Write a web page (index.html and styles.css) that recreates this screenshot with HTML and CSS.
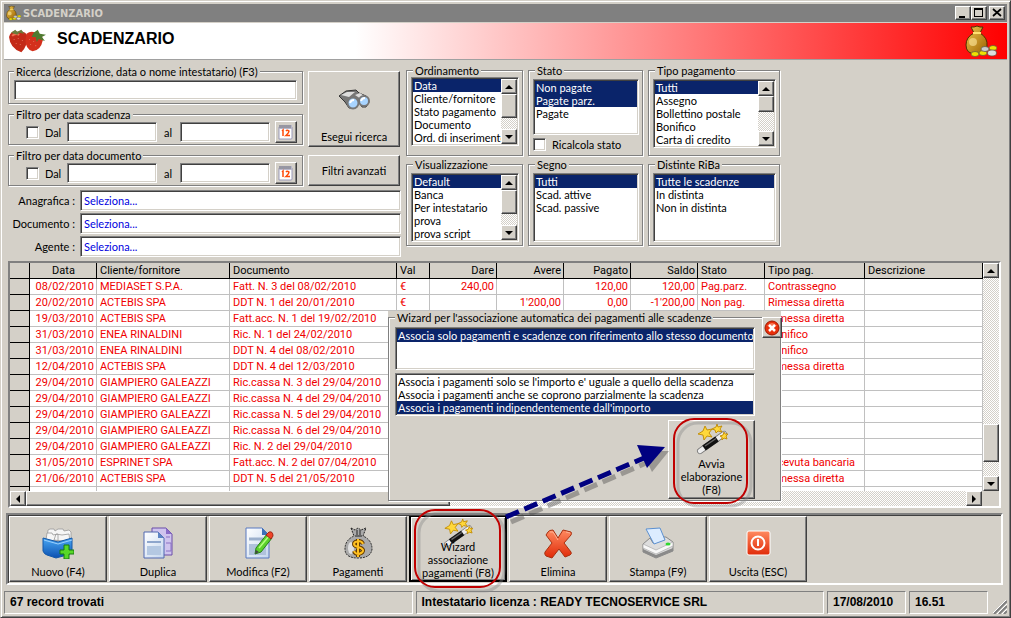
FILE: index.html
```html
<!DOCTYPE html>
<html lang="it">
<head>
    <meta charset="UTF-8">
    <meta name="viewport" content="width=device-width, initial-scale=1.0">
    <title>SCADENZARIO</title>
    <link rel="stylesheet" href="styles.css">
</head>
<body>
    <!-- icone condivise -->
    <svg class="defs" width="0" height="0">
        <defs>
            <linearGradient id="gold" x1="0" y1="0" x2="1" y2="1"><stop offset="0" stop-color="#f0c850"/><stop offset="1" stop-color="#9a6000"/></linearGradient>
            <linearGradient id="blue" x1="0" y1="0" x2="0" y2="1"><stop offset="0" stop-color="#4aa8f4"/><stop offset="1" stop-color="#0a4fb0"/></linearGradient>
            <linearGradient id="page" x1="0" y1="0" x2="1" y2="1"><stop offset="0" stop-color="#ffffff"/><stop offset="1" stop-color="#c4d6ee"/></linearGradient>
            <linearGradient id="red" x1="0" y1="0" x2="0" y2="1"><stop offset="0" stop-color="#ff8a60"/><stop offset="1" stop-color="#e02a08"/></linearGradient>
            <symbol id="wand" viewBox="0 0 32 32">
                <path d="M4 28 28 11" stroke="#777" stroke-width="6" stroke-linecap="round"/>
                <path d="M4 28 28 11" stroke="#eee" stroke-width="4.500" stroke-linecap="round"/>
                <path d="M8 25 21 16" stroke="#111" stroke-width="6"/>
                <path d="M9 23 20 15.500" stroke="#666" stroke-width="1.500"/>
                <g fill="#ffd83a" stroke="#c08a00" stroke-width=".9" stroke-linejoin="round">
                    <path d="M9 3l2 4 5-1-3 4 3 4-5-1-3 4-1-5-5-1 5-3z"/>
                    <path d="M21 1l1 3 4-1-2 3 2 3-4-1-2 2-1-3-3-1 4-2z"/>
                    <path d="M28 9l1 2 3 0-2 2 1 3-3-1-2 2 0-3-2-1 3-1z"/>
                </g>
            </symbol>
            <symbol id="calendar" viewBox="0 0 16 16">
                <path d="M1 3h13v11a1 1 0 0 1-1 1H1z" fill="#fff" stroke="#9a9ab8"/>
                <path d="M1 1h13v4H1z" fill="#b8b8cc"/>
                <path d="M2 1v3M4 1v3M6 1v3M8 1v3M10 1v3M12 1v3" stroke="#666" stroke-width=".8"/>
                <path d="M4 7l1-1v6M8 7q1-1.500 3 0 0 2-3 4.500h4" fill="none" stroke="#ff4a08" stroke-width="1.500"/>
            </symbol>
            <symbol id="sack" viewBox="0 0 32 32">
                <path d="M6 2l3 0 3-1 3 1 3 0-3 6q8 5 7 13-1 8-11 8Q1 29 1 20q0-8 8-12z" fill="url(#gold)" stroke="#4c3300"/>
                <path d="M8 8h8" stroke="#ffe070" stroke-width="2"/>
                <ellipse cx="8" cy="17" rx="4" ry="4" fill="#ffe9a0" opacity=".6"/>
                <g stroke="#554" stroke-width=".7"><ellipse cx="10" cy="29" rx="4" ry="2.500" fill="#f0e000"/><ellipse cx="18" cy="28" rx="4" ry="2.500" fill="#f0e000"/><ellipse cx="28" cy="23" rx="4" ry="2.500" fill="#f0e000"/><ellipse cx="20" cy="24" rx="4" ry="2.500" fill="#ccc"/><ellipse cx="27" cy="28" rx="4.500" ry="3" fill="#ddd"/></g>
            </symbol>
        </defs>
    </svg>

    <div class="window">
        <div class="titlebar">
            <svg class="title-icon" viewBox="0 0 32 32"><use href="#sack"/></svg>
            <span class="title-text">SCADENZARIO</span>
            <button class="win-btn" aria-label="Riduci"><svg viewBox="0 0 14 12"><path d="M3 9h6v2H3z"/></svg></button>
            <button class="win-btn" aria-label="Ingrandisci"><svg viewBox="0 0 14 12"><path d="M2 1h9v9H2zM3 3v6h7V3z" fill-rule="evenodd"/></svg></button>
            <button class="win-btn win-close" aria-label="Chiudi"><svg viewBox="0 0 14 12"><path d="M3 2l8 7M11 2l-8 7" stroke="#000" stroke-width="1.700"/></svg></button>
        </div>

        <div class="header">
            <svg class="berries" viewBox="0 0 38 24">
                <path d="M1 8Q3 1 9 3q9-1 10 5 0 9-6 15Q2 19 1 8z" fill="#c32a18"/>
                <path d="M18 5q5-4 11 0 5 2 5 6-2 10-10 11-7-2-7-11z" fill="#d4301c"/>
                <path d="M4 7q3-3 7-1" stroke="#f07050" stroke-width="2" fill="none"/>
                <path d="M3 4l4-3 2 2 4-2 3 4-5-1-2 2z" fill="#6b7a3a"/>
                <path d="M25 4l4-3 2 4 6 1-4 2 3 4-6-2-2 3-1-5-4 0z" fill="#4f7a30"/>
                <path d="M6 10v1M10 9v1M14 11v1M8 14v1M12 15v1M21 10v1M25 12v1M22 15v1M27 16v1" stroke="#e06850" stroke-width="1"/>
            </svg>
            <h1>SCADENZARIO</h1>
            <svg class="header-sack" viewBox="0 0 32 32"><use href="#sack"/></svg>
        </div>

        <div class="filters">
            <div class="left">
                <div class="search">
                    <div class="boxes">
                        <fieldset class="box box-search">
                            <legend><label for="ricerca">Ricerca (descrizione, data o nome intestatario) (F3)</label></legend>
                            <input class="field" id="ricerca" type="text">
                        </fieldset>
                        <fieldset class="box box-date">
                            <legend>Filtro per data scadenza</legend>
                            <input class="check" id="scad" type="checkbox"><label class="from" for="scad">Dal</label>
                            <input class="field date" type="text" aria-label="Scadenza dal">
                            <label class="to" for="scad-al">al</label>
                            <input class="field date" id="scad-al" type="text">
                            <button class="btn cal" aria-label="Calendario scadenza"><svg><use href="#calendar"/></svg></button>
                        </fieldset>
                        <fieldset class="box box-date">
                            <legend>Filtro per data documento</legend>
                            <input class="check" id="docu" type="checkbox"><label class="from" for="docu">Dal</label>
                            <input class="field date" type="text" aria-label="Documento dal">
                            <label class="to" for="docu-al">al</label>
                            <input class="field date" id="docu-al" type="text">
                            <button class="btn cal" aria-label="Calendario documento"><svg><use href="#calendar"/></svg></button>
                        </fieldset>
                    </div>
                    <div class="search-buttons">
                        <button class="btn btn-search">
                            <svg viewBox="0 0 32 22">
                                <path d="M1 7L8 2l10-1 3 3 7 3 3 6-3 5h-4l-3-5-4 6h-6L7 13z" fill="#777" stroke="#333"/>
                                <path d="M3 6l6-3 8 0-6 5zM17 6l5-2 6 4-5 2z" fill="#ddd"/>
                                <circle cx="15" cy="14" r="5.500" fill="#a8d4ff" stroke="#777" stroke-width="2"/>
                                <circle cx="26" cy="12" r="5" fill="#a8d4ff" stroke="#777" stroke-width="2"/>
                                <path d="M12 14q1-3 4-3M23 12q1-3 4-3" stroke="#fff" stroke-width="2" fill="none"/>
                            </svg>
                            Esegui ricerca
                        </button>
                        <button class="btn btn-advanced">Filtri avanzati</button>
                    </div>
                </div>
                <div class="lookup">
                    <label for="anagrafica">Anagrafica :</label><input class="field" id="anagrafica" type="text" value="Seleziona...">
                    <label for="documento">Documento :</label><input class="field" id="documento" type="text" value="Seleziona...">
                    <label for="agente">Agente :</label><input class="field" id="agente" type="text" value="Seleziona...">
                </div>
            </div>

            <div class="lists">
                <fieldset class="box sort">
                    <legend>Ordinamento</legend>
                    <div class="listbox">
                        <select size="5" aria-label="Ordinamento">
                            <option selected>Data</option><option>Cliente/fornitore</option><option>Stato pagamento</option><option>Documento</option><option>Ord. di inserimento</option>
                        </select>
                        <div class="vscroll"><button class="btn arrow up" aria-label="Su"></button><div class="thumb"></div><button class="btn arrow down" aria-label="Giù"></button></div>
                    </div>
                </fieldset>
                <fieldset class="box">
                    <legend>Stato</legend>
                    <div class="listbox">
                        <select class="four" size="4" multiple aria-label="Stato">
                            <option selected>Non pagate</option><option selected>Pagate parz.</option><option>Pagate</option>
                        </select>
                    </div>
                    <div class="recalc"><input class="check" id="ricalcola" type="checkbox"><label for="ricalcola">Ricalcola stato</label></div>
                </fieldset>
                <fieldset class="box">
                    <legend>Tipo pagamento</legend>
                    <div class="listbox">
                        <select size="5" aria-label="Tipo pagamento">
                            <option selected>Tutti</option><option>Assegno</option><option>Bollettino postale</option><option>Bonifico</option><option>Carta di credito</option>
                        </select>
                        <div class="vscroll"><button class="btn arrow up" aria-label="Su"></button><div class="thumb short"></div><button class="btn arrow down" aria-label="Giù"></button></div>
                    </div>
                </fieldset>
                <fieldset class="box">
                    <legend>Visualizzazione</legend>
                    <div class="listbox">
                        <select size="5" aria-label="Visualizzazione">
                            <option selected>Default</option><option>Banca</option><option>Per intestatario</option><option>prova</option><option>prova script</option>
                        </select>
                        <div class="vscroll"><button class="btn arrow up" aria-label="Su"></button><div class="thumb"></div><button class="btn arrow down" aria-label="Giù"></button></div>
                    </div>
                </fieldset>
                <fieldset class="box">
                    <legend>Segno</legend>
                    <div class="listbox">
                        <select size="5" aria-label="Segno">
                            <option selected>Tutti</option><option>Scad. attive</option><option>Scad. passive</option>
                        </select>
                    </div>
                </fieldset>
                <fieldset class="box">
                    <legend>Distinte RiBa</legend>
                    <div class="listbox">
                        <select size="5" aria-label="Distinte RiBa">
                            <option selected>Tutte le scadenze</option><option>In distinta</option><option>Non in distinta</option>
                        </select>
                    </div>
                </fieldset>
            </div>
        </div>

        <div class="grid">
            <div class="grid-body">
                <table>
                    <colgroup>
                        <col class="c-mark"><col class="c-num"><col class="c-name"><col class="c-doc"><col class="c-val"><col class="c-num"><col class="c-num"><col class="c-num"><col class="c-num"><col class="c-num"><col class="c-type"><col>
                    </colgroup>
                    <thead>
                        <tr><th></th><th class="center">Data</th><th>Cliente/fornitore</th><th>Documento</th><th>Val</th><th class="num">Dare</th><th class="num">Avere</th><th class="num">Pagato</th><th class="num">Saldo</th><th>Stato</th><th>Tipo pag.</th><th>Descrizione</th></tr>
                    </thead>
                    <tbody>
                        <tr><th></th><td class="num">08/02/2010</td><td>MEDIASET S.P.A.</td><td>Fatt. N. 3 del 08/02/2010</td><td>€</td><td class="num">240,00</td><td></td><td class="num">120,00</td><td class="num">120,00</td><td>Pag.parz.</td><td>Contrassegno</td><td></td></tr>
                        <tr><th></th><td class="num">20/02/2010</td><td>ACTEBIS SPA</td><td>DDT N. 1 del 20/01/2010</td><td>€</td><td></td><td class="num">1'200,00</td><td class="num">0,00</td><td class="num">-1'200,00</td><td>Non pag.</td><td>Rimessa diretta</td><td></td></tr>
                        <tr><th></th><td class="num">19/03/2010</td><td>ACTEBIS SPA</td><td>Fatt.acc. N. 1 del 19/02/2010</td><td></td><td></td><td></td><td></td><td></td><td></td><td>Rimessa diretta</td><td></td></tr>
                        <tr><th></th><td class="num">31/03/2010</td><td>ENEA RINALDINI</td><td>Ric. N. 1 del 24/02/2010</td><td></td><td></td><td></td><td></td><td></td><td></td><td>Bonifico</td><td></td></tr>
                        <tr><th></th><td class="num">31/03/2010</td><td>ENEA RINALDINI</td><td>DDT N. 4 del 08/02/2010</td><td></td><td></td><td></td><td></td><td></td><td></td><td>Bonifico</td><td></td></tr>
                        <tr><th></th><td class="num">12/04/2010</td><td>ACTEBIS SPA</td><td>DDT N. 4 del 12/03/2010</td><td></td><td></td><td></td><td></td><td></td><td></td><td>Rimessa diretta</td><td></td></tr>
                        <tr><th></th><td class="num">29/04/2010</td><td>GIAMPIERO GALEAZZI</td><td>Ric.cassa N. 3 del 29/04/2010</td><td></td><td></td><td></td><td></td><td></td><td></td><td></td><td></td></tr>
                        <tr><th></th><td class="num">29/04/2010</td><td>GIAMPIERO GALEAZZI</td><td>Ric.cassa N. 4 del 29/04/2010</td><td></td><td></td><td></td><td></td><td></td><td></td><td></td><td></td></tr>
                        <tr><th></th><td class="num">29/04/2010</td><td>GIAMPIERO GALEAZZI</td><td>Ric.cassa N. 5 del 29/04/2010</td><td></td><td></td><td></td><td></td><td></td><td></td><td></td><td></td></tr>
                        <tr><th></th><td class="num">29/04/2010</td><td>GIAMPIERO GALEAZZI</td><td>Ric.cassa N. 6 del 29/04/2010</td><td></td><td></td><td></td><td></td><td></td><td></td><td></td><td></td></tr>
                        <tr><th></th><td class="num">29/04/2010</td><td>GIAMPIERO GALEAZZI</td><td>Ric. N. 2 del 29/04/2010</td><td></td><td></td><td></td><td></td><td></td><td></td><td></td><td></td></tr>
                        <tr><th></th><td class="num">31/05/2010</td><td>ESPRINET SPA</td><td>Fatt.acc. N. 2 del 07/04/2010</td><td></td><td></td><td></td><td></td><td></td><td></td><td>Ricevuta bancaria</td><td></td></tr>
                        <tr><th></th><td class="num">21/06/2010</td><td>ACTEBIS SPA</td><td>DDT N. 5 del 21/05/2010</td><td></td><td></td><td></td><td></td><td></td><td></td><td>Rimessa diretta</td><td></td></tr>
                        <tr class="cut"><th></th><td></td><td></td><td></td><td></td><td></td><td></td><td></td><td></td><td></td><td></td><td></td></tr>
                    </tbody>
                </table>
                <div class="vscroll"><button class="btn arrow up" aria-label="Su"></button><div class="track"></div><div class="thumb tall"></div><div class="gap"></div><button class="btn arrow down" aria-label="Giù"></button></div>
            </div>
            <div class="hscroll"><button class="btn arrow prev" aria-label="Sinistra"></button><div class="thumb wide"></div><div class="track"></div><button class="btn arrow next" aria-label="Destra"></button></div>

            <div class="wizard">
                <fieldset class="box">
                    <legend>Wizard per l'associazione automatica dei pagamenti alle scadenze</legend>
                    <div class="listbox">
                        <select class="three" size="3" aria-label="Riferimento">
                            <option selected>Associa solo pagamenti e scadenze con riferimento allo stesso documento</option>
                        </select>
                    </div>
                    <div class="listbox">
                        <select class="three" size="3" aria-label="Importo">
                            <option>Associa i pagamenti solo se l'importo e' uguale a quello della scadenza</option>
                            <option>Associa i pagamenti anche se coprono parzialmente la scadenza</option>
                            <option selected>Associa i pagamenti indipendentemente dall'importo</option>
                        </select>
                    </div>
                    <button class="btn btn-run"><svg><use href="#wand"/></svg>Avvia<br>elaborazione<br>(F8)</button>
                </fieldset>
                <button class="btn wizard-close" aria-label="Chiudi wizard"><svg viewBox="0 0 16 16"><circle cx="8" cy="8" r="7" fill="#e8300c" stroke="#a01800"/><path d="M3 6q5-6 10 0" fill="#ff9878" opacity=".7"/><path d="M5 5l6 6M11 5l-6 6" stroke="#fff" stroke-width="2.500"/></svg></button>
            </div>
        </div>

        <div class="toolbar">
            <button class="btn tool">
                <svg viewBox="0 0 32 32">
                    <g fill="#f6f6f6" stroke="#999" stroke-width=".8"><path d="M5 12l1-9 2-1h4l1 2 3-2h5l1 2 5-1 2 2v9z"/><path d="M4 13l1-7h5l1 2 5-1v7zM12 13l2-6 6 1 7-1 1 8z"/></g>
                    <path d="M1 11l15 4 14-4v13q-1 3-5 4l-11 3-9-3q-3-1-4-4z" fill="url(#blue)" stroke="#1458a8"/>
                    <path d="M2 13l14 4 14-4" stroke="#9ad0ff" fill="none"/>
                    <path d="M22 18h5v5h5v4h-5v5h-5v-5h-4v-4h4z" fill="#58d828" stroke="#187a10"/>
                </svg>
                Nuovo (F4)
            </button>
            <button class="btn tool">
                <svg viewBox="0 0 32 32">
                    <path d="M10 1h14l6 6v21H10z" fill="#cfc4ee" stroke="#6a4ca8"/>
                    <path d="M24 1v6h6z" fill="#8a6cc8"/><path d="M24 10h4M24 16h5v8h-5" stroke="#8a70c4" fill="none"/>
                    <path d="M2 5h14l6 6v20H2z" fill="url(#page)" stroke="#5068b0"/>
                    <path d="M16 5v6h6z" fill="#5c84c4"/><path d="M5 15h14" stroke="#8ea6cc" stroke-width="2"/><path d="M5 19h14v9H5z" fill="#b4c8e2"/>
                </svg>
                Duplica
            </button>
            <button class="btn tool">
                <svg viewBox="0 0 32 32">
                    <path d="M4 1h16l7 7v23H4z" fill="url(#page)" stroke="#5878c0"/>
                    <path d="M20 1v7h7z" fill="#3c70b8"/><path d="M7 12h14" stroke="#9cb0cc" stroke-width="3"/><path d="M7 17h17v11H7z" fill="#b0c2dc"/>
                    <path d="M13 27l1-6L25 7l5 4-11 14z" fill="#5cd22c" stroke="#288018"/>
                    <path d="M17 21L27 9" stroke="#b4ff80" stroke-width="1.500"/>
                    <path d="M24 8l3-3q4-1 4 4l-2 3z" fill="#f04428" stroke="#a02818"/>
                    <path d="M13 27l1-4 3 2z" fill="#444"/>
                </svg>
                Modifica (F2)
            </button>
            <button class="btn tool">
                <svg viewBox="0 0 32 32">
                    <path d="M9 1l4 2 3-2 3 2 5-2-3 8q9 4 9 13-1 9-14 9T3 22q0-9 9-13z" fill="#aaa" stroke="#222" stroke-dasharray="2 1"/>
                    <path d="M13 9h7M15 3v5M18 3v5" stroke="#222"/>
                    <ellipse cx="9" cy="21" rx="3" ry="6" fill="#e0e0e0"/>
                    <path d="M21 17q-1-3-5-3-4 1-4 3t4 3 5 3-4 4q-4 0-5-3M16 12v18" fill="none" stroke="#643c00" stroke-width="4"/>
                    <path d="M21 17q-1-3-5-3-4 1-4 3t4 3 5 3-4 4q-4 0-5-3M16 12v18" fill="none" stroke="#ffc020" stroke-width="2"/>
                </svg>
                Pagamenti
            </button>
            <button class="btn tool tool-wizard">
                <svg><use href="#wand"/></svg>
                <span>Wizard<br>associazione<br>pagamenti (F8)</span>
            </button>
            <button class="btn tool">
                <svg viewBox="0 0 32 32">
                    <path d="M6 5q1-2 5-2l5 8 5-8 8 2q1 1 0 3l-7 8 7 9q1 2-1 3l-5 2-6-8-7 9-6-2q-2-2-1-4l7-9-6-8z" fill="url(#red)" stroke="#a83010"/>
                    <path d="M8 5l3 0 5 8M24 5l4 1" stroke="#ffb090" fill="none"/>
                </svg>
                Elimina
            </button>
            <button class="btn tool">
                <svg viewBox="0 0 32 32">
                    <path d="M1 17L8 11l3 5 11-3-2-3h4l7 5v9l-17 7-13-6z" fill="#ddd" stroke="#888"/>
                    <path d="M4 2l14-1 5 12-11 4z" fill="#dcecff" stroke="#5c90d0"/>
                    <path d="M1 17l13 6 17-8v4l-17 8-13-6z" fill="#f8f8f8" stroke="#aaa" stroke-width=".7"/>
                    <path d="M1 22l13 6 17-7v3l-17 7-13-6z" fill="#8a8a8a"/>
                    <ellipse cx="26" cy="17" rx="2.500" ry="1.500" fill="#30d830"/>
                </svg>
                Stampa (F9)
            </button>
            <button class="btn tool">
                <svg viewBox="0 0 32 32">
                    <rect x="5" y="4" width="23" height="24" rx="2" fill="url(#red)" stroke="#fff"/>
                    <circle cx="16" cy="16" r="6.500" fill="none" stroke="#fff" stroke-width="2"/>
                    <path d="M16 12v7" stroke="#fff" stroke-width="2"/>
                </svg>
                Uscita (ESC)
            </button>
        </div>

        <div class="statusbar">
            <div class="pane pane-wide">67 record trovati</div>
            <div class="pane pane-wide">Intestatario licenza : READY TECNOSERVICE SRL</div>
            <div class="pane pane-small">17/08/2010</div>
            <div class="pane pane-small">16.51</div>
            <svg class="grip" viewBox="0 0 14 14"><path d="M1 14L14 1M6 14l8-8M11 14l3-3" stroke="#808080" stroke-width="2"/><path d="M0 13L13 0M4 14L14 4M9 14l5-5" stroke="#fff"/></svg>
        </div>

        <!-- evidenziazioni sopra la finestra -->
        <svg class="marks" viewBox="0 0 1011 618">
            <g fill="none" stroke="#888" stroke-width="3" opacity=".4">
                <rect x="419" y="513" width="85" height="78" rx="20"/>
                <rect x="678" y="423" width="73" height="83" rx="20"/>
            </g>
            <g opacity=".4"><path d="M511 522l135-59" stroke="#444" stroke-width="5" stroke-dasharray="14 6"/><path d="M669 451l-27 0 10 21z" fill="#444"/></g>
            <g fill="none" stroke="#c00000" stroke-width="2">
                <rect x="415" y="510" width="85" height="77" rx="20"/>
                <rect x="674" y="419" width="73" height="84" rx="20"/>
            </g>
            <path d="M506 517l138-59" stroke="#000080" stroke-width="5" stroke-dasharray="14 6"/>
            <path d="M665 447l-28-2 10 23z" fill="#000080"/>
        </svg>
    </div>
</body>
</html>
```
FILE: styles.css
```css
:root {
    --face: #d4d0c8;
    --shadow: #808080;
    --dark: #404040;
    --select: #0a246a;
    --dither: repeating-conic-gradient(#ffffff 0 25%, #d4d0c8 0 50%) 0 0 / 2px 2px;
}
* {
    box-sizing: border-box;
}
body {
    margin: 0;
    background: var(--face);
    color: #000;
    font-family: Lato, "Liberation Sans", Arial, sans-serif;
    font-size: 11px;
    line-height: 13px;
}
button, input, select {
    font: inherit;
    color: inherit;
    margin: 0;
    border-radius: 0;
    outline: none;
}
svg {
    display: block;
    flex: none;
}
.defs {
    position: absolute;
}
.window {
    position: relative;
    display: flex;
    flex-direction: column;
    min-height: 100vh;
    padding: 3px;
    border: 1px solid;
    border-color: var(--face) var(--dark) var(--dark) var(--face);
    box-shadow: inset 1px 1px #fff, inset -1px -1px var(--shadow);
}

/* barra del titolo */
.titlebar {
    display: flex;
    align-items: center;
    height: 18px;
    padding: 0 2px;
    background: #808080;
    color: var(--face);
}
.title-icon {
    width: 15px;
    height: 16px;
}
.title-text {
    flex: 1;
    padding-left: 2px;
    font-family: "DejaVu Sans Condensed", "DejaVu Sans", sans-serif;
    font-weight: bold;
}
.win-btn {
    width: 16px;
    height: 14px;
    padding: 0;
    background: var(--face);
    border: 1px solid;
    border-color: #fff var(--dark) var(--dark) #fff;
    box-shadow: inset -1px -1px var(--shadow);
}
.win-close {
    margin-left: 2px;
}
.win-btn svg {
    width: 14px;
    height: 12px;
}
.header {
    display: flex;
    align-items: center;
    height: 37px;
    margin-top: 1px;
    padding: 0 10px 0 4px;
    background: linear-gradient(90deg, #fff 35%, #f00);
    border-bottom: 1px solid #a0a0a0;
}
.header h1 {
    flex: 1;
    margin: 0 0 4px 10px;
    font-family: "Liberation Sans", Arial, sans-serif;
    font-size: 16px;
    line-height: 20px;
}
.berries {
    width: 39px;
    height: 26px;
}
.header-sack {
    width: 32px;
    height: 32px;
}

/* pulsanti e campi */
.btn {
    padding: 0;
    background: var(--face);
    border: 1px solid;
    border-color: #fff var(--dark) var(--dark) #fff;
    box-shadow: inset -1px -1px var(--shadow);
}
.field {
    min-width: 0;
    padding: 0 3px;
    background: #fff;
    border: 1px solid;
    border-color: var(--shadow) #fff #fff var(--shadow);
    box-shadow: inset 1px 1px var(--dark), inset -1px -1px var(--face);
}
.check {
    appearance: none;
    width: 13px;
    height: 13px;
    background: #fff;
    border: 1px solid;
    border-color: var(--shadow) #fff #fff var(--shadow);
    box-shadow: inset 1px 1px var(--dark), inset -1px -1px var(--face);
}
.box {
    min-width: 0;
    margin: 0;
    padding: 2px 5px 3px;
    border: 1px solid var(--shadow);
    box-shadow: 1px 1px #fff, inset 1px 1px #fff;
}
.box legend {
    padding: 0 2px;
    background: var(--face);
}

/* filtri */
.filters {
    display: flex;
    gap: 5px;
    padding: 4px;
}
.left {
    width: 393px;
    padding-top: 1px;
}
.search {
    display: flex;
    gap: 5px;
}
.boxes {
    display: flex;
    flex-direction: column;
    gap: 4px;
    width: 295px;
}
.box-search .field {
    display: block;
    width: 100%;
    height: 20px;
}
.box-date {
    display: flex;
    align-items: center;
    padding: 0 5px 1px 17px;
}
.box-date legend {
    margin-left: -12px;
}
.from {
    width: 22px;
    margin-left: 6px;
}
.date {
    width: 91px;
    height: 20px;
}
.to {
    width: 23px;
    padding-left: 7px;
}
.cal {
    width: 22px;
    height: 22px;
    margin-left: 5px;
}
.cal svg {
    width: 16px;
    height: 16px;
    margin: 0 auto;
}
.search-buttons {
    display: flex;
    flex-direction: column;
    gap: 8px;
    flex: 1;
    padding: 6px 1px 0 0;
}
.btn-search {
    display: flex;
    flex-direction: column;
    align-items: center;
    justify-content: flex-end;
    gap: 19px;
    height: 76px;
    padding-bottom: 3px;
}
.btn-search svg {
    width: 32px;
    height: 22px;
}
.btn-advanced {
    height: 31px;
}
.lookup {
    display: grid;
    grid-template-columns: 67px 1fr;
    align-items: center;
    gap: 2px 5px;
    margin-top: 4px;
    text-align: right;
}
.lookup .field {
    height: 21px;
    color: #0000e0;
}
.lists {
    display: grid;
    grid-template-columns: 117px 115px 132px;
    align-content: start;
    gap: 2px 5px;
}
.lists .box {
    min-height: 88px;
}
.lists .sort {
    height: 92px;
    padding-top: 0;
}
.lists .box {
    padding-left: 4px;
    padding-right: 3px;
}
.lists .box legend {
    margin-left: 2px;
}
.listbox {
    display: flex;
    padding: 1px;
    background: #fff;
    border: 1px solid;
    border-color: var(--shadow) #fff #fff var(--shadow);
    box-shadow: inset 1px 1px var(--dark), inset -1px -1px var(--face);
}
.listbox select {
    flex: 1;
    min-width: 0;
    height: 65px;
    padding: 0;
    background: none;
    border: 0;
    overflow: hidden;
}
.listbox .four {
    height: 52px;
}
.listbox .three {
    height: 39px;
}
.listbox option {
    height: 13px;
    min-height: 13px;
    padding: 0 0 0 1px;
    line-height: 13px;
    overflow: hidden;
}
.listbox option:checked {
    background: linear-gradient(var(--select), var(--select));
    color: #fff;
}
.recalc {
    display: flex;
    gap: 6px;
    margin-top: 3px;
}

/* barre di scorrimento */
.vscroll {
    display: flex;
    flex-direction: column;
    width: 16px;
    background: var(--dither);
}
.vscroll .down {
    margin-top: auto;
}
.thumb {
    height: 24px;
    background: var(--face);
    border: 1px solid;
    border-color: #fff var(--dark) var(--dark) #fff;
    box-shadow: inset -1px -1px var(--shadow);
}
.thumb.short {
    height: 16px;
}
.thumb.tall {
    height: 38px;
}
.gap {
    height: 14px;
}
.arrow {
    display: grid;
    place-items: center;
    width: 16px;
    height: 15px;
}
.arrow::before {
    content: "";
    border: 4px solid transparent;
}
.up::before {
    border-top: 0;
    border-bottom-color: #000;
}
.down::before {
    border-bottom: 0;
    border-top-color: #000;
}
.prev::before {
    border-left: 0;
    border-right-color: #000;
}
.next::before {
    border-right: 0;
    border-left-color: #000;
}

/* tabella scadenze */
.grid {
    position: relative;
    margin: 0 6px 0 4px;
    border: 2px solid;
    border-color: var(--shadow) #fff #fff var(--shadow);
}
.grid-body {
    display: flex;
    background: #fff;
}
.grid-body table {
    flex: 1;
    width: 100%;
    table-layout: fixed;
    border-collapse: separate;
    border-spacing: 0;
    font-family: Roboto, "Liberation Sans", Arial, sans-serif;
}
.grid-body .vscroll .track {
    flex: 1;
}
.c-mark { width: 20px; }
.c-num { width: 67px; }
.c-name { width: 133px; }
.c-doc { width: 167px; }
.c-val { width: 33px; }
.c-type { width: 100px; }
th, td {
    height: 16px;
    padding: 0 2px 0 3px;
    border: 0 solid #c0c0c0;
    border-width: 0 1px 1px 0;
    line-height: 15px;
    text-align: left;
    white-space: nowrap;
    overflow: hidden;
}
th {
    background: var(--face);
    border-color: #000;
    font-weight: normal;
}
td {
    color: #f00000;
}
.num {
    text-align: right;
}
.center {
    text-align: center;
}
.cut th, .cut td {
    height: 4px;
    border-bottom: 0;
}
.hscroll {
    display: flex;
    height: 15px;
    padding-right: 17px;
    background: var(--face);
}
.hscroll .track {
    flex: 1;
    background: var(--dither);
}
.thumb.wide {
    width: 424px;
    height: 15px;
}

/* wizard sopra la tabella */
.wizard {
    position: absolute;
    top: 48px;
    left: 378px;
    width: 393px;
    background: var(--face);
}
.wizard .box {
    display: flex;
    flex-direction: column;
    height: 190px;
    padding: 3px 25px 0 6px;
}
.wizard .listbox + .listbox {
    margin-top: 3px;
}
.btn-run {
    align-self: flex-end;
    width: 87px;
    height: 79px;
    margin-top: 4px;
}
.btn-run svg {
    width: 32px;
    height: 32px;
    margin: 0 auto 2px;
}
.wizard-close {
    position: absolute;
    top: 6px;
    right: -1px;
    width: 20px;
    height: 21px;
}
.wizard-close svg {
    width: 16px;
    height: 16px;
    margin: 0 auto;
}

/* barra dei comandi */
.toolbar {
    display: flex;
    gap: 2px;
    margin: 5px 4px 0 2px;
    padding: 1px;
    border: 2px solid;
    border-color: var(--shadow) #fff #fff var(--shadow);
    box-shadow: inset 1px 1px var(--dark);
}
.tool {
    display: flex;
    flex-direction: column;
    align-items: center;
    justify-content: flex-end;
    gap: 6px;
    width: 98px;
    height: 66px;
    padding-bottom: 3px;
}
.tool svg {
    width: 32px;
    height: 32px;
}
.tool-wizard {
    border: 2px solid #000;
    border-top-width: 1px;
    padding-bottom: 1px;
    gap: 0;
    box-shadow: inset 1px 1px #fff, inset -1px -1px var(--shadow);
}
.tool-wizard svg {
    width: 30px;
    height: 30px;
    margin-bottom: -8px;
}

/* barra di stato */
.statusbar {
    display: flex;
    gap: 3px;
    margin-top: auto;
    font-family: "Liberation Sans", Arial, sans-serif;
    font-size: 12px;
    font-weight: bold;
}
.pane {
    height: 23px;
    padding: 0 5px;
    border: 1px solid;
    border-color: var(--shadow) #fff #fff var(--shadow);
    line-height: 21px;
}
.pane-wide {
    flex: 1;
}
.pane-small {
    width: 79px;
}
.grip {
    align-self: flex-end;
    width: 14px;
    height: 14px;
    margin-left: 2px;
}

.marks {
    position: absolute;
    top: -1px;
    left: -1px;
    width: 1011px;
    height: 618px;
    pointer-events: none;
}
```
